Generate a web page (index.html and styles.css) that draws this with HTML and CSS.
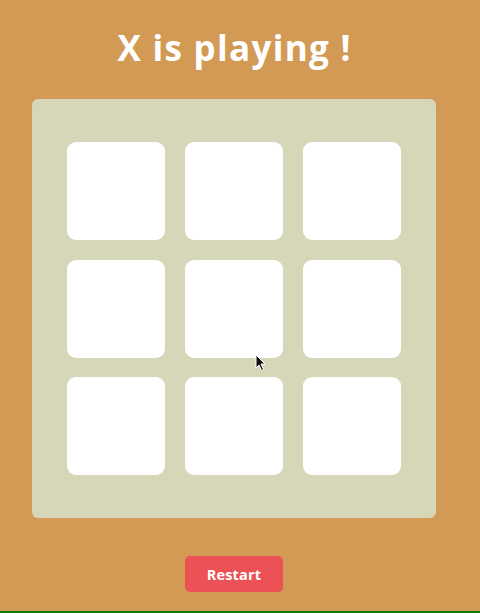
FILE: index.html
```html
<!DOCTYPE html>
<html lang="en">
<head>
<meta charset="utf-8">
<title>Tic Tac Toe</title>
<link rel="stylesheet" href="styles.css">
</head>
<body>
<main class="game">
  <h1 class="status">X is playing !</h1>
  <div class="board">
    <div class="cell"></div>
    <div class="cell"></div>
    <div class="cell"></div>
    <div class="cell"></div>
    <div class="cell cell-hover">
      <svg class="cursor" width="12" height="18" viewBox="0 0 12 18"><path d="M1 1 L1 14 L4 11 L6.5 16.5 L8.5 15.5 L6 10 L10 10 Z" fill="#111" stroke="#fff" stroke-width="1"/></svg>
    </div>
    <div class="cell"></div>
    <div class="cell"></div>
    <div class="cell"></div>
    <div class="cell"></div>
  </div>
  <button class="restart">Restart</button>
</main>
<div class="bottom-bar"></div>
</body>
</html>
```

FILE: styles.css
```css
html, body {
  margin: 0;
  padding: 0;
}
body {
  background: #d39a55;
  height: 613px;
  display: flex;
  flex-direction: column;
  font-family: "Open Sans", "Liberation Sans", sans-serif;
  overflow: hidden;
}
.game {
  width: 468px;
  flex: 1;
  display: flex;
  flex-direction: column;
  align-items: center;
}
.status {
  margin: 24px 0 0;
  height: 75px;
  font-size: 35px;
  line-height: 48px;
  font-weight: 700;
  color: #ffffff;
  letter-spacing: 1.3px;
  padding-left: 1.3px;
}
.board {
  width: 404px;
  box-sizing: border-box;
  padding: 43px 35px;
  background: #d6d6b9;
  border-radius: 6px;
  display: grid;
  grid-template-columns: repeat(3, 98px);
  grid-template-rows: repeat(3, 98px);
  column-gap: 20px;
  row-gap: 19.5px;
}
.cell {
  background: #ffffff;
  border-radius: 9px;
}
.cell-hover {
  position: relative;
}
.cursor {
  position: absolute;
  left: 70px;
  top: 94px;
}
.restart {
  margin-top: 38px;
  width: 98px;
  height: 36px;
  border: none;
  border-radius: 5px;
  background: #ec5155;
  color: #ffffff;
  font-family: "Open Sans", "Liberation Sans", sans-serif;
  font-weight: 700;
  font-size: 14.5px;
  letter-spacing: 0.2px;
  padding: 0;
}
.bottom-bar {
  height: 2px;
  background: #0b7d0b;
}
```
